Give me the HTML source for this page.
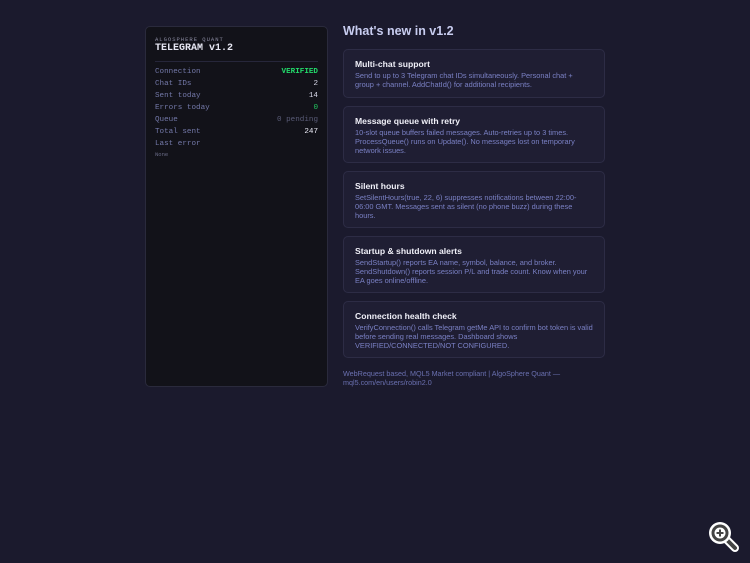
<!DOCTYPE html><html><head><style>
body{margin:0;width:750px;height:563px;background:#1b1a2d;font-family:"Liberation Sans",sans-serif;position:relative;overflow:hidden}
.lp{position:absolute;left:145px;top:26px;width:181px;height:359px;background:#121219;border:1px solid #2a2a3c;border-radius:5px;font-family:"Liberation Mono",monospace}
.brand{position:absolute;left:9px;top:9px;font-size:5.5px;letter-spacing:1px;color:#8a8aa0}
.tt{position:absolute;left:9px;top:16px;font-size:10px;font-weight:bold;color:#e8e8f4}
.hr{position:absolute;left:9px;right:9px;top:34px;border-top:1px solid #26263a}
.row{position:absolute;left:9px;right:9px;font-size:7.6px;color:#7378a8;display:flex;justify-content:space-between}
.row b{font-weight:normal}
h2{position:absolute;left:343px;top:24px;margin:0;font-size:12.5px;color:#c8cdf0;font-weight:bold}
.c{position:absolute;left:343px;width:262px;background:#1f1e33;border:1px solid #2d2c45;border-radius:5px;box-sizing:border-box;padding:9px 11px}
.c h3{margin:0 0 3px;font-size:8.6px;color:#f0f0f8}
.c p{margin:0;font-size:7.4px;line-height:8.8px;color:#7a80c4}
.ft{position:absolute;left:343px;top:369px;font-size:7.2px;line-height:9px;color:#6a70b0}
</style></head><body>
<div class="lp">
<div class="brand">ALGOSPHERE QUANT</div>
<div class="tt">TELEGRAM v1.2</div>
<div class="hr"></div>
<div class="row" style="top:41px"><span>Connection</span><b style="color:#22d86a;font-weight:bold">VERIFIED</b></div>
<div class="row" style="top:53px"><span>Chat IDs</span><b style="color:#d8d8e8">2</b></div>
<div class="row" style="top:65px"><span>Sent today</span><b style="color:#d8d8e8">14</b></div>
<div class="row" style="top:77px"><span>Errors today</span><b style="color:#22c860">0</b></div>
<div class="row" style="top:89px"><span>Queue</span><b style="color:#5a5c78">0 pending</b></div>
<div class="row" style="top:101px"><span>Total sent</span><b style="color:#ececf8">247</b></div>
<div class="row" style="top:113px"><span>Last error</span></div>
<div class="row" style="top:124px;font-size:5.5px;color:#6a6c88"><span>None</span></div>
</div>
<h2>What's new in v1.2</h2>
<div class="c" style="top:49px;height:49px"><h3>Multi-chat support</h3><p>Send to up to 3 Telegram chat IDs simultaneously. Personal chat + group + channel. AddChatId() for additional recipients.</p></div>
<div class="c" style="top:106px;height:57px"><h3>Message queue with retry</h3><p>10-slot queue buffers failed messages. Auto-retries up to 3 times. ProcessQueue() runs on Update(). No messages lost on temporary network issues.</p></div>
<div class="c" style="top:171px;height:57px"><h3>Silent hours</h3><p>SetSilentHours(true, 22, 6) suppresses notifications between 22:00-06:00 GMT. Messages sent as silent (no phone buzz) during these hours.</p></div>
<div class="c" style="top:236px;height:57px"><h3>Startup &amp; shutdown alerts</h3><p>SendStartup() reports EA name, symbol, balance, and broker. SendShutdown() reports session P/L and trade count. Know when your EA goes online/offline.</p></div>
<div class="c" style="top:301px;height:57px"><h3>Connection health check</h3><p>VerifyConnection() calls Telegram getMe API to confirm bot token is valid before sending real messages. Dashboard shows VERIFIED/CONNECTED/NOT CONFIGURED.</p></div>
<div class="ft">WebRequest based, MQL5 Market compliant | AlgoSphere Quant —<br>mql5.com/en/users/robin2.0</div>
<svg style="position:absolute;left:706px;top:519px" width="36" height="36" viewBox="0 0 36 36">
<line x1="19" y1="19" x2="29" y2="29" stroke="#fff" stroke-width="8" stroke-linecap="round"/>
<line x1="19" y1="19" x2="29" y2="29" stroke="#444" stroke-width="4" stroke-linecap="round"/>
<circle cx="14" cy="14" r="11" fill="#fff"/><circle cx="14" cy="14" r="8.5" fill="#444"/><circle cx="14" cy="14" r="5.5" fill="#fff"/>
<path d="M14 10.5v7M10.5 14h7" stroke="#444" stroke-width="2"/></svg>
</body></html>
